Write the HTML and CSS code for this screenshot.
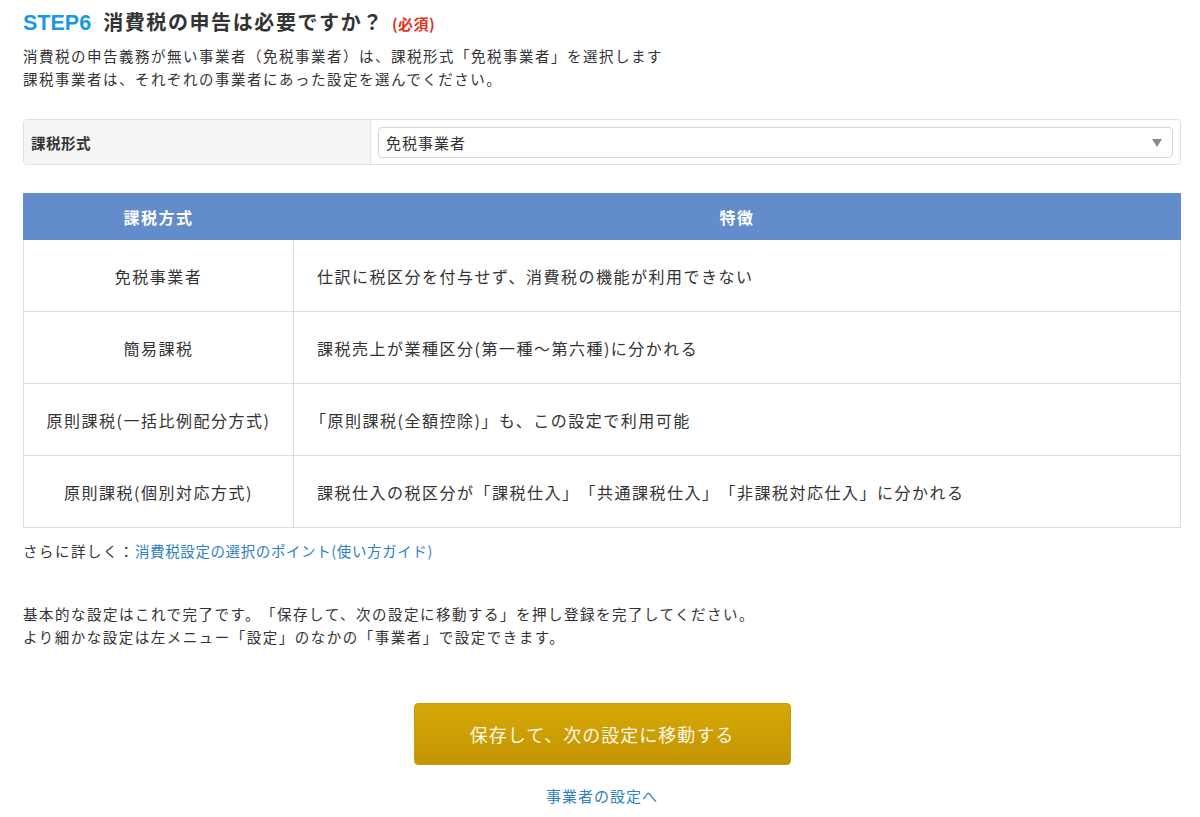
FILE: index.html
```html
<!DOCTYPE html>
<html lang="ja">
<head>
<meta charset="utf-8">
<title>STEP6</title>
<link rel="stylesheet" href="styles.css">
</head>
<body>
<div class="page">
  <h2 class="step-title"><span class="step-no">STEP6</span><span class="step-q">消費税の申告は必要ですか？</span><span class="req">(必須)</span></h2>
  <p class="desc">消費税の申告義務が無い事業者（免税事業者）は、課税形式「免税事業者」を選択します<br>課税事業者は、それぞれの事業者にあった設定を選んでください。</p>

  <div class="form-box">
    <div class="form-label">課税形式</div>
    <div class="form-field">
      <div class="select">
        <span class="select-value">免税事業者</span>
        <span class="select-arrow"></span>
      </div>
    </div>
  </div>

  <table class="tax-table">
    <thead>
      <tr><th class="col-a">課税方式</th><th>特徴</th></tr>
    </thead>
    <tbody>
      <tr><td class="col-a">免税事業者</td><td>仕訳に税区分を付与せず、消費税の機能が利用できない</td></tr>
      <tr><td class="col-a">簡易課税</td><td>課税売上が業種区分(第一種～第六種)に分かれる</td></tr>
      <tr><td class="col-a">原則課税(一括比例配分方式)</td><td class="bracket">「原則課税(全額控除)」も、この設定で利用可能</td></tr>
      <tr><td class="col-a">原則課税(個別対応方式)</td><td>課税仕入の税区分が「課税仕入」「共通課税仕入」「非課税対応仕入」に分かれる</td></tr>
    </tbody>
  </table>

  <p class="more">さらに詳しく：<a href="#" class="link">消費税設定の選択のポイント(使い方ガイド)</a></p>

  <p class="note">基本的な設定はこれで完了です。「保存して、次の設定に移動する」を押し登録を完了してください。<br>より細かな設定は左メニュー「設定」のなかの「事業者」で設定できます。</p>

  <div class="actions">
    <button class="btn-save" type="button">保存して、次の設定に移動する</button>
    <a href="#" class="link back-link">事業者の設定へ</a>
  </div>
</div>
</body>
</html>
```

FILE: styles.css
```css
html, body {
  margin: 0;
  padding: 0;
  background: #fff;
}
body {
  font-family: "Noto Sans CJK JP", "Noto Sans", sans-serif;
  color: #333;
  font-size: 14.5px;
  letter-spacing: 1.5px;
  text-spacing-trim: space-all;
}
.page {
  padding: 8px 19px 0 23px;
}
.step-title {
  margin: 0;
  height: 28px;
  line-height: 28px;
  font-weight: bold;
  letter-spacing: 0;
  display: flex;
  align-items: baseline;
}
.step-no {
  color: #1b98e3;
  font-family: "Liberation Sans", Arial, sans-serif;
  font-size: 21.5px;
  margin-right: 12px;
}
.step-q {
  font-size: 20px;
  letter-spacing: 1.6px;
  color: #333;
}
.req {
  color: #e0311d;
  font-size: 15px;
  margin-left: 8px;
  letter-spacing: 0.5px;
}
.desc {
  margin: 8px 0 0;
  line-height: 23px;
}
.form-box {
  margin-top: 29px;
  display: flex;
  height: 46px;
  border: 1px solid #e0e0e0;
  border-radius: 4px;
  box-sizing: border-box;
  overflow: hidden;
}
.form-label {
  width: 347px;
  box-sizing: border-box;
  background: #f5f5f5;
  border-right: 1px solid #e6e6e6;
  display: flex;
  align-items: center;
  padding-left: 7px;
  font-weight: bold;
  letter-spacing: 0.5px;
  font-size: 14.5px;
}
.form-field {
  flex: 1;
  padding: 7px 7px 6px 7px;
}
.select {
  height: 31px;
  box-sizing: border-box;
  border: 1px solid #d6d6d6;
  border-radius: 4px;
  display: flex;
  align-items: center;
  padding: 0 8px 0 7px;
  background: #fff;
}
.select-value {
  flex: 1;
  font-size: 15px;
  letter-spacing: 1px;
}
.select-arrow {
  width: 0;
  height: 0;
  border-left: 5px solid transparent;
  border-right: 5px solid transparent;
  border-top: 8px solid #8a8a8a;
  margin-right: 2px;
}
.tax-table {
  margin-top: 28px;
  width: 100%;
  border-collapse: collapse;
  font-size: 16px;
  letter-spacing: 1.5px;
}
.tax-table th {
  background: #628ccb;
  color: #fff;
  font-weight: bold;
  height: 45px;
  padding: 0;
  text-align: center;
  border: 1px solid #628ccb;
}
.tax-table td {
  height: 71px;
  border: 1px solid #dcdcdc;
  padding: 0 0 0 23px;
  text-align: left;
}
.tax-table .col-a {
  width: 269px;
  text-align: center;
  padding: 0;
}
.tax-table td.bracket {
  padding-left: 16px;
}
.more {
  margin: 11px 0 0;
  line-height: 23px;
}
.link {
  color: #2f7fc4;
  text-decoration: none;
  letter-spacing: 0.6px;
}
.note {
  margin: 40px 0 0;
  line-height: 23px;
}
.actions {
  margin-top: 55px;
  display: flex;
  flex-direction: column;
  align-items: center;
}
.btn-save {
  width: 377px;
  height: 62px;
  border: 1px solid #c99c05;
  border-radius: 4px;
  background: linear-gradient(#d6a90a, #c39400);
  color: #fdf8e8;
  font-family: "Noto Sans CJK JP", sans-serif;
  font-size: 18px;
  letter-spacing: 1px;
  cursor: pointer;
  padding: 0;
}
.back-link {
  margin-top: 19px;
  line-height: 23px;
  font-size: 15px;
  letter-spacing: 1px;
}
```
